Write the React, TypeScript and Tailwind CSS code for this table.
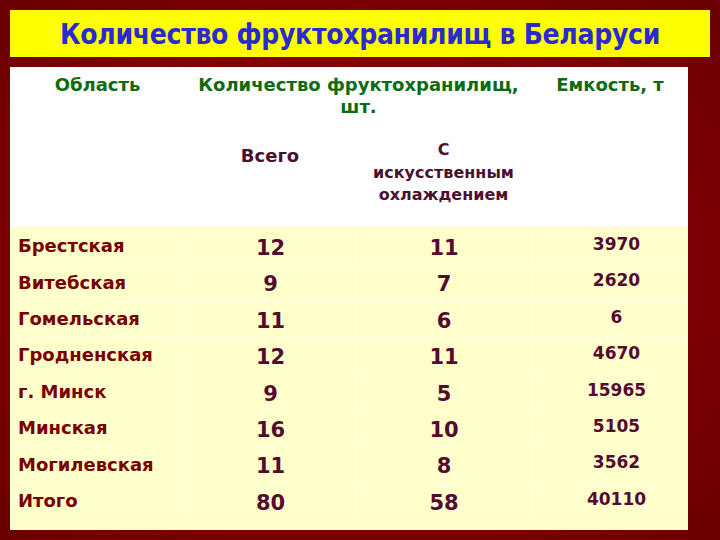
const rows = [
  { name: "Брестская", total: "12", cooled: "11", capacity: "3970" },
  { name: "Витебская", total: "9", cooled: "7", capacity: "2620" },
  { name: "Гомельская", total: "11", cooled: "6", capacity: "6" },
  { name: "Гродненская", total: "12", cooled: "11", capacity: "4670" },
  { name: "г. Минск", total: "9", cooled: "5", capacity: "15965" },
  { name: "Минская", total: "16", cooled: "10", capacity: "5105" },
  { name: "Могилевская", total: "11", cooled: "8", capacity: "3562" },
  { name: "Итого", total: "80", cooled: "58", capacity: "40110" },
];

export default function App() {
  return (
    <div className="w-[720px] h-[540px] overflow-hidden bg-[radial-gradient(ellipse_at_center,#9a0010_0%,#800008_60%,#6a0000_100%)] pt-[10px] font-['DejaVu_Sans',sans-serif]">
      <div className="ml-[10px] w-[700px] h-[47px] bg-[#ffff00] flex items-center justify-center">
        <h1 className="text-[28px] font-bold text-[#2a2ad0] tracking-[-0.3px] leading-none pt-[2px] font-['DejaVu_Sans_Condensed','DejaVu_Sans',sans-serif]">
          Количество фруктохранилищ в Беларуси
        </h1>
      </div>

      <div className="ml-[10px] mt-[10px] w-[678px] h-[463px] bg-[#ffffcc] flex flex-col">
        <div className="bg-white h-[160px] grid grid-cols-[175px_170px_177px_156px] grid-rows-[64px_96px]">
          <div className="row-span-2 text-center pt-[7px] text-[18px] font-bold text-[#0d6b12] leading-[22px]">
            Область
          </div>
          <div className="col-span-2 text-center pt-[7px] text-[18px] font-bold text-[#0d6b12] leading-[22px]">
            Количество фруктохранилищ,
            <br />
            шт.
          </div>
          <div className="row-span-2 text-center pt-[7px] text-[18px] font-bold text-[#0d6b12] leading-[22px]">
            Емкость, т
          </div>
          <div className="text-center pt-[14px] text-[18px] font-bold text-[#4a1030] leading-[22px]">
            Всего
          </div>
          <div className="text-center pt-[8px] text-[16px] font-bold text-[#4a1030] leading-[22.5px]">
            С
            <br />
            искусственным
            <br />
            охлаждением
          </div>
        </div>

        {rows.map((r) => (
          <div
            key={r.name}
            className="grid grid-cols-[175px_170px_177px_156px] h-[36.4px] shrink-0"
          >
            <div className="pl-[8px] flex items-center text-[18px] font-bold text-[#7a0000] border-b border-[#fffde6]">
              {r.name}
            </div>
            <div className="flex items-center justify-center pt-[6px] text-[21px] font-bold text-[#550a30] border-b border-l border-[#fffde6]">
              {r.total}
            </div>
            <div className="flex items-center justify-center pt-[6px] text-[21px] font-bold text-[#550a30] border-b border-l border-[#fffde6]">
              {r.cooled}
            </div>
            <div className="flex items-center justify-center pb-[2px] pl-[12px] text-[17px] font-bold text-[#550a30] border-b border-l border-[#fffde6]">
              {r.capacity}
            </div>
          </div>
        ))}
      </div>
    </div>
  );
}
